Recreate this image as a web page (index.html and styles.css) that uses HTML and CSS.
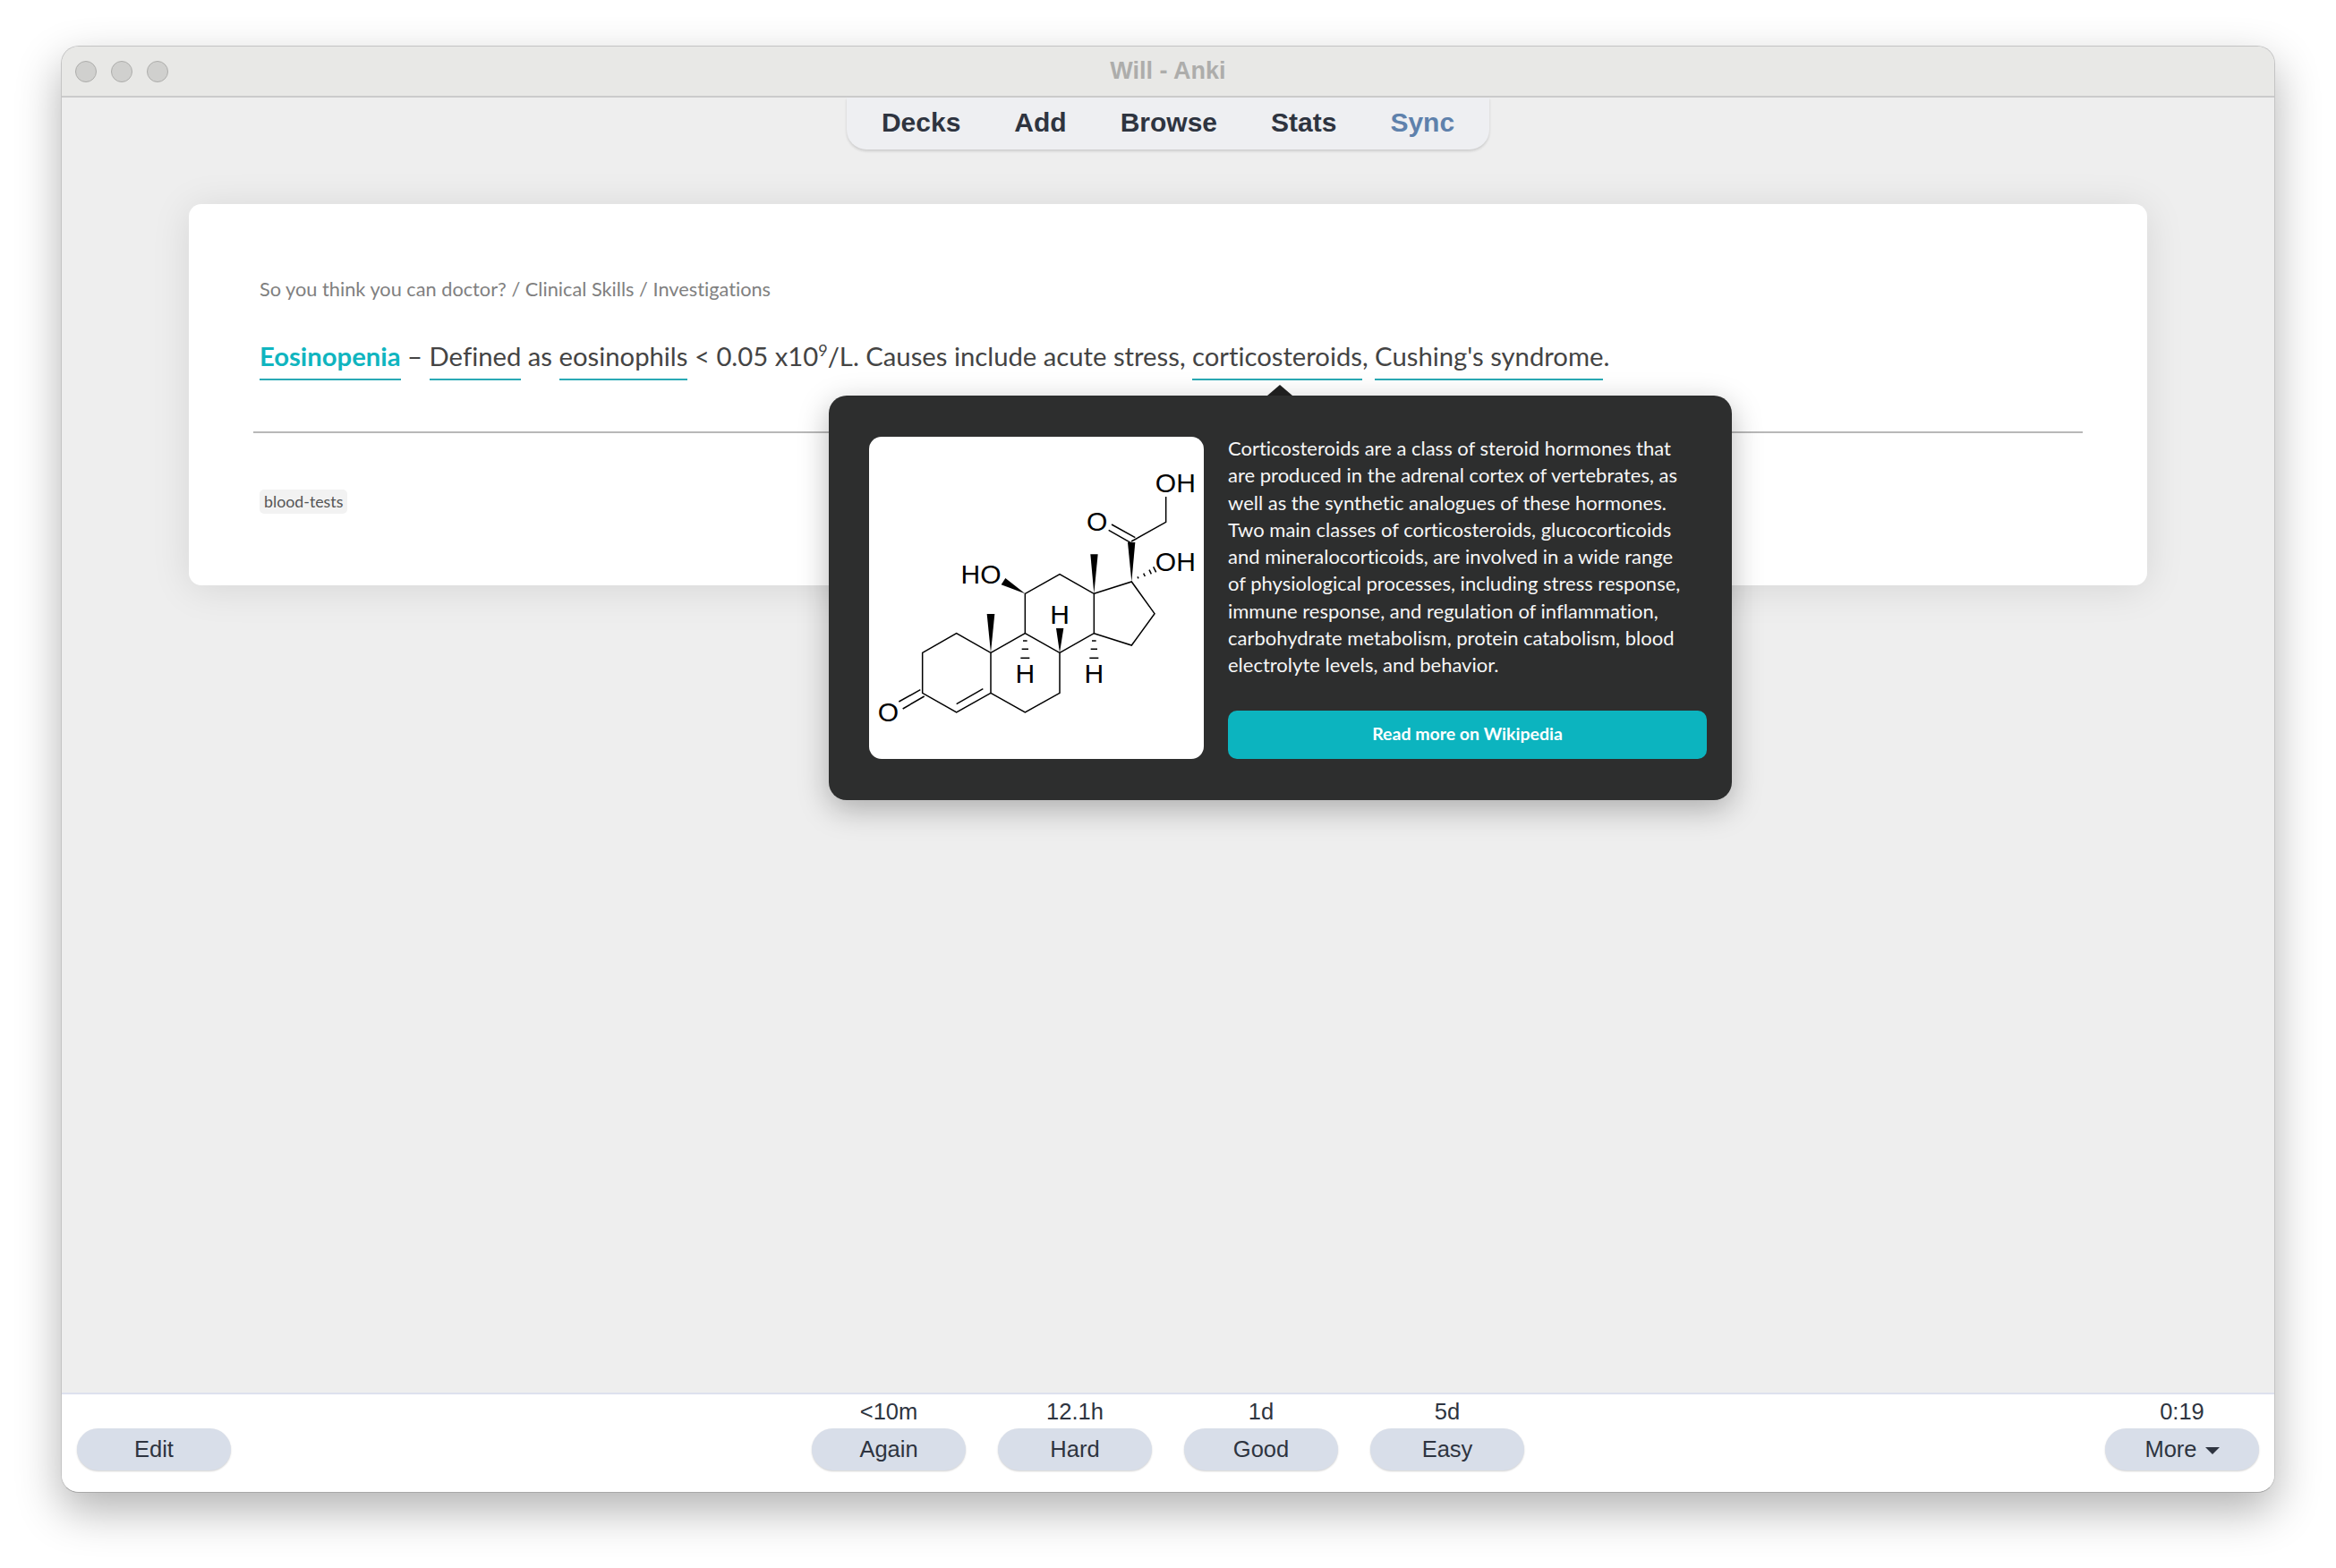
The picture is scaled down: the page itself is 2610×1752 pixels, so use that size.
FILE: index.html
```html
<!DOCTYPE html>
<html lang="en">
<head>
    <meta charset="UTF-8">
    <meta name="viewport" content="width=device-width, initial-scale=1.0">
    <title>Will - Anki</title>
    <link rel="stylesheet" href="styles.css">
</head>
<body>

    <div class="window">
        <div class="titlebar">
            <div class="lights">
                <span class="light"></span>
                <span class="light"></span>
                <span class="light"></span>
            </div>
            <div class="title">Will - Anki</div>
        </div>

        <div class="main">
            <nav class="nav">
                <a>Decks</a>
                <a>Add</a>
                <a>Browse</a>
                <a>Stats</a>
                <a class="sync">Sync</a>
            </nav>

            <div class="card">
                <div class="crumb">So you think you can doctor? / Clinical Skills / Investigations</div>
                <p class="front"><span class="term head">Eosinopenia</span> – <span class="term">Defined</span> as <span class="term">eosinophils</span> &lt; 0.05 x10<sup>9</sup>/L. Causes include acute stress, <span class="term">corticosteroids</span>, <span class="term">Cushing's syndrome</span>.</p>
                <hr class="rule">
                <span class="tag">blood-tests</span>

                <div class="popover">
                    <div class="figure">
                        <svg class="molecule" viewBox="33 384 1122 1080" width="374" height="360">
                            <g class="bonds">
                                <path d="M212 1108 326 1043 441 1108 441 1243 326 1308 212 1243Z"/>
                                <path d="M326 1280 415 1229"/>
                                <path d="M205 1232 133 1272M218 1254 146 1296"/>
                                <path d="M441 1108 556 1043 672 1108 672 1243 556 1308 441 1243"/>
                                <path d="M556 1043 556 910 672 845 787 910 787 1043 672 1108"/>
                                <path d="M787 910 913 870 990 977 913 1083 787 1043"/>
                                <path d="M912 735 1028 670 1028 585"/>
                                <path d="M915 742 836 697M925 722 846 678"/>
                                <path d="M549 1068H563M545 1096H567M541 1126H571"/>
                                <path d="M780 1068H794M776 1096H798M772 1126H802"/>
                                <path d="M933 853 936 859M953 842 958 852M972 830 979 844M986 820 995 838"/>
                            </g>
                            <g class="wedges">
                                <polygon points="441,1108 428,978 454,978"/>
                                <polygon points="787,910 775,778 800,778"/>
                                <polygon points="556,910 490,858 476,880"/>
                                <polygon points="672,1108 660,1026 685,1026"/>
                                <polygon points="913,870 900,738 925,738"/>
                            </g>
                            <g class="atoms">
                                <text x="1060" y="570">OH</text>
                                <text x="1060" y="835">OH</text>
                                <text x="408" y="877">HO</text>
                                <text x="797" y="698">O</text>
                                <text x="97" y="1338">O</text>
                                <text x="672" y="1010">H</text>
                                <text x="556" y="1210">H</text>
                                <text x="787" y="1210">H</text>
                            </g>
                        </svg>
                    </div>
                    <div class="info">
                        <p class="blurb">Corticosteroids are a class of steroid hormones that are produced in the adrenal cortex of vertebrates, as well as the synthetic analogues of these hormones. Two main classes of corticosteroids, glucocorticoids and mineralocorticoids, are involved in a wide range of physiological processes, including stress response, immune response, and regulation of inflammation, carbohydrate metabolism, protein catabolism, blood electrolyte levels, and behavior.</p>
                        <a class="wiki">Read more on Wikipedia</a>
                    </div>
                </div>
            </div>
        </div>

        <div class="bottom">
            <div class="slot left">
                <button class="btn">Edit</button>
            </div>
            <div class="answers">
                <div class="slot"><span class="due">&lt;10m</span><button class="btn">Again</button></div>
                <div class="slot"><span class="due">12.1h</span><button class="btn">Hard</button></div>
                <div class="slot"><span class="due">1d</span><button class="btn">Good</button></div>
                <div class="slot"><span class="due">5d</span><button class="btn">Easy</button></div>
            </div>
            <div class="slot right">
                <span class="due">0:19</span>
                <button class="btn">More <span class="caret"></span></button>
            </div>
        </div>
    </div>

</body>
</html>
```

FILE: styles.css
```css
html, body {
    margin: 0;
    height: 100%;
    background: #fff;
}
body {
    padding: 51px 68px 84px;
    box-sizing: border-box;
    font-family: "Liberation Sans", Arial, sans-serif;
    color: #2e3440;
}
.window {
    height: 100%;
    display: flex;
    flex-direction: column;
    box-sizing: border-box;
    border: 1px solid #c4c4c4;
    border-bottom-color: #a8a8a8;
    border-radius: 20px;
    overflow: hidden;
    background: #eee;
    box-shadow: 0 20px 50px rgba(0,0,0,0.3);
}

/* title bar */
.titlebar {
    flex: none;
    height: 57px;
    box-sizing: border-box;
    display: grid;
    grid-template-columns: 1fr auto 1fr;
    align-items: center;
    background: #e8e8e6;
    border-bottom: 2px solid #cbcbcb;
}
.lights {
    display: flex;
    gap: 16px;
    padding-left: 15px;
}
.light {
    width: 22px;
    height: 22px;
    border: 1px solid #adadab;
    border-radius: 50%;
    background: #d0d0ce;
}
.title {
    font-size: 27px;
    font-weight: bold;
    color: #adadab;
}

/* deck nav */
.main {
    flex: 1;
    display: flex;
    flex-direction: column;
    align-items: center;
}
.nav {
    display: flex;
    height: 58px;
    box-sizing: border-box;
    align-items: center;
    gap: 60px;
    padding: 0 39px 2px;
    background: #eeeff2;
    border-radius: 0 0 22px 22px;
    box-shadow: 0 2px 3px rgba(0,0,0,0.14);
    font-size: 30px;
    font-weight: bold;
}
.sync { color: #5e81ac; }

/* card */
.card {
    position: relative;
    align-self: stretch;
    height: 426px;
    box-sizing: border-box;
    margin: 61px 142px 0;
    padding: 0 72px;
    background: #fff;
    border-radius: 14px;
    box-shadow: 0 4px 44px rgba(0,0,0,0.1);
    font-family: Lato, sans-serif;
    font-variant-ligatures: none;
}
.crumb {
    padding: 82px 7px 0;
    font-size: 21.75px;
    line-height: 26px;
    color: #808080;
}
.front {
    margin: 44px 0 0;
    padding-left: 7px;
    font-size: 29.25px;
    line-height: 36px;
    color: #444;
}
.term {
    padding-bottom: 8px;
    border-bottom: 2px solid #2aa9b5;
}
.head {
    font-weight: bold;
    color: #10b5bf;
}
sup {
    font-size: 18px;
    line-height: 0;
}
.rule {
    margin: 66px 0 0;
    border: 0;
    border-top: 2px solid #b8b8b8;
}
.tag {
    display: inline-block;
    margin: 63px 0 0 7px;
    padding: 0 5px;
    height: 27px;
    line-height: 27px;
    border-radius: 5px;
    background: #f2f2f2;
    font-size: 17.8px;
    color: #555;
}

/* popover */
.popover {
    position: absolute;
    left: 715px;
    top: 214px;
    width: 1009px;
    height: 452px;
    box-sizing: border-box;
    display: flex;
    gap: 27px;
    padding: 46px 28px 46px 45px;
    background: #2d2e2e;
    border-radius: 20px;
    box-shadow: 0 10px 34px rgba(0,0,0,0.28);
}
.popover::before {
    content: "";
    position: absolute;
    left: 490px;
    top: -12px;
    border: 14px solid transparent;
    border-top: 0;
    border-bottom: 12px solid #1f1f1f;
}
.figure {
    flex: none;
    width: 374px;
    height: 360px;
    background: #fff;
    border-radius: 14px;
}
.molecule { display: block; }
.bonds path {
    fill: none;
    stroke: #000;
    stroke-width: 4.5;
}
.wedges polygon { fill: #000; }
.atoms text {
    font-family: "Liberation Sans", Arial, sans-serif;
    font-size: 90px;
    text-anchor: middle;
    fill: #000;
}
.info {
    flex: 1;
    display: flex;
    flex-direction: column;
    justify-content: space-between;
}
.blurb {
    margin: -2px 0 0;
    max-width: 522px;
    font-size: 22px;
    line-height: 30.3px;
    color: #f6f6f6;
}
.wiki {
    height: 54px;
    line-height: 52px;
    text-align: center;
    background: #0cb4bf;
    border-radius: 10px;
    font-size: 19.5px;
    font-weight: bold;
    color: #fff;
}

/* answer bar */
.bottom {
    flex: none;
    height: 111px;
    box-sizing: border-box;
    display: grid;
    grid-template-columns: 1fr auto 1fr;
    align-items: end;
    padding: 0 17px 24px;
    background: #fff;
    border-top: 2px solid #dde1ee;
}
.answers {
    display: flex;
    gap: 36px;
}
.slot {
    display: flex;
    flex-direction: column;
    align-items: center;
}
.left { align-items: flex-start; }
.right {
    align-items: center;
    justify-self: end;
}
.due {
    font-size: 25.5px;
    line-height: 30px;
    margin-bottom: 4px;
}
.btn {
    display: block;
    width: 172px;
    height: 47px;
    padding: 0;
    border: 0;
    border-radius: 24px;
    background: #d8dee9;
    box-shadow: 0 1px 2px rgba(0,0,0,0.18);
    font: 25.5px "Liberation Sans", Arial, sans-serif;
    color: #2e3440;
}
.caret {
    display: inline-block;
    margin-left: 2px;
    vertical-align: 3px;
    border: 8px solid transparent;
    border-top: 8px solid #2e3440;
    border-bottom: 0;
}
```
